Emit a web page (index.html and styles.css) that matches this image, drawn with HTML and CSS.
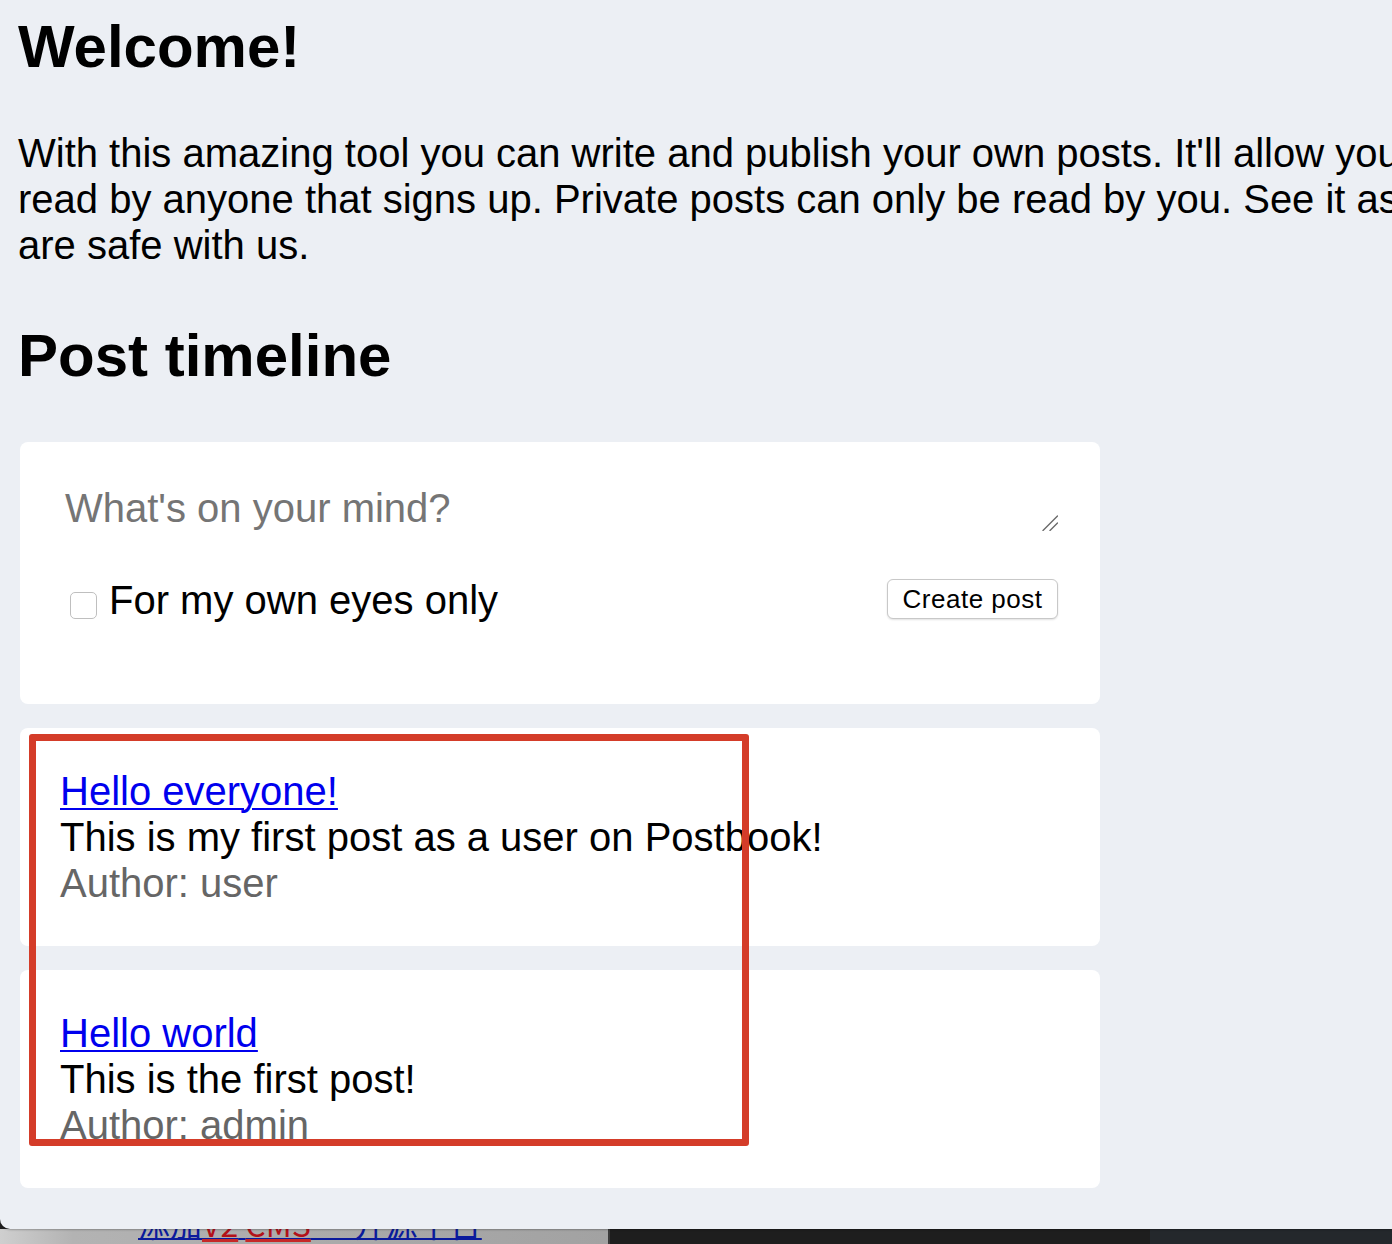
FILE: index.html
```html
<!DOCTYPE html>
<html lang="en">
<head>
<meta charset="utf-8">
<title>Postbook</title>
<link rel="stylesheet" href="styles.css">
</head>
<body>
<div class="window">
  <h1 class="title">Welcome!</h1>
  <p class="intro">With this amazing tool you can write and publish your own posts. It'll allow you to write public and private posts. Public posts can be<br>read by anyone that signs up. Private posts can only be read by you. See it as your own diary. We guarantee that your posts<br>are safe with us.</p>
  <h2 class="section">Post timeline</h2>
  <div class="timeline">
    <form class="card composer">
      <div class="input-wrap">
        <textarea class="composer-input" placeholder="What's on your mind?"></textarea>
        <svg class="grip" width="16" height="16" viewBox="0 0 16 16" aria-hidden="true">
          <path d="M1 15.5 L15.5 1 M8 15.5 L15.5 8" stroke="#6a6a6a" stroke-width="1.4" fill="none" stroke-linecap="round"/>
        </svg>
      </div>
      <div class="composer-row">
        <label class="private"><input type="checkbox" class="check"><span>For my own eyes only</span></label>
        <button class="btn" type="button">Create post</button>
      </div>
    </form>
    <article class="card post">
      <a class="post-title" href="#">Hello everyone!</a>
      <div class="post-body">This is my first post as a user on Postbook!</div>
      <div class="post-author">Author: user</div>
    </article>
    <article class="card post">
      <a class="post-title" href="#">Hello world</a>
      <div class="post-body">This is the first post!</div>
      <div class="post-author">Author: admin</div>
    </article>
  </div>
  <div class="annotation"></div>
</div>
<div class="desktop">
  <div class="desk-left"><a class="desk-link" href="#">添加<span class="hl">V2</span> <span class="hl">CMS</span> — 开源平台</a></div>
  <div class="desk-mid"></div>
  <div class="desk-right"></div>
</div>
</body>
</html>
```

FILE: styles.css
```css
html, body {
  margin: 0;
  padding: 0;
  overflow: hidden;
  background: #1f1f1f;
}

body {
  font-family: "Liberation Sans", Arial, sans-serif;
  color: #000;
  width: 1392px;
  height: 1244px;
}

.window {
  position: relative;
  box-sizing: border-box;
  height: 1229px;
  padding: 12px 0 0 19px;
  background: #eceff4;
  overflow: hidden;
  border-bottom-left-radius: 10px;
  box-shadow: 0 1px 2px rgba(0, 0, 0, 0.25);
  z-index: 1;
}

.title {
  margin: 0 0 0 -1px;
  font-size: 60px;
  line-height: 69px;
  font-weight: 700;
}

.intro {
  margin: 49px 0 0 -1px;
  font-size: 40px;
  line-height: 46px;
  white-space: nowrap;
}

.section {
  margin: 53px 0 0 -1px;
  font-size: 60px;
  line-height: 69px;
  font-weight: 700;
}

.timeline {
  margin: 52px 0 0 1px;
  width: 1080px;
  display: flex;
  flex-direction: column;
  gap: 24px;
}

.card {
  background: #fff;
  border-radius: 8px;
  padding: 40px;
  margin: 0;
}

.input-wrap {
  position: relative;
}

.composer-input {
  display: block;
  box-sizing: border-box;
  width: 100%;
  height: 52px;
  padding: 3px 5px;
  margin: 0;
  border: none;
  outline: none;
  resize: none;
  font-family: inherit;
  font-size: 40px;
  line-height: 46px;
  color: #000;
  background: #fff;
}

.composer-input::placeholder {
  color: #757575;
}

.grip {
  position: absolute;
  right: 2px;
  bottom: 3px;
}

.composer-row {
  display: flex;
  align-items: flex-start;
  justify-content: space-between;
  margin: 43px 2px 41px 0;
  height: 46px;
}

.private {
  display: flex;
  align-items: flex-start;
  font-size: 40px;
  line-height: 46px;
}

.check {
  appearance: none;
  -webkit-appearance: none;
  box-sizing: border-box;
  width: 27px;
  height: 27px;
  margin: 15px 12px 0 10px;
  border: 1.5px solid #bfbfbf;
  border-radius: 5px;
  background: #fff;
}

.btn {
  box-sizing: border-box;
  margin-top: 2px;
  width: 171px;
  height: 40px;
  padding: 0;
  background: #fff;
  border: 1px solid #c8c8c8;
  border-radius: 6px;
  box-shadow: 0 1px 2px rgba(0, 0, 0, 0.12);
  font-family: "Liberation Sans", Arial, sans-serif;
  font-size: 26px;
  letter-spacing: 0.5px;
  color: #000;
}

.post {
  font-size: 40px;
  line-height: 46px;
}

.post-title {
  display: block;
  width: max-content;
  color: #0000ee;
  text-decoration: underline;
  text-decoration-thickness: 2px;
  text-underline-offset: 3px;
}

.post-author {
  color: #666;
}

.annotation {
  position: absolute;
  left: 29px;
  top: 734px;
  width: 720px;
  height: 412px;
  box-sizing: border-box;
  border: 7px solid #d43c29;
  border-radius: 3px;
}

.desktop {
  display: flex;
  height: 15px;
}

.desk-left {
  width: 608px;
  overflow: hidden;
  background: linear-gradient(to right, #cfcfcf 0%, #b3b3b3 12%, #a9a9a9 60%, #a2a2a2 100%);
  border-right: 2px solid #3a3a3a;
}

.desk-link {
  display: block;
  margin: -22px 0 0 138px;
  font-family: "Noto Sans CJK SC", sans-serif;
  font-size: 32px;
  line-height: 32px;
  white-space: nowrap;
  color: #0a1a9c;
  text-decoration: underline;
  text-decoration-thickness: 2px;
}

.hl {
  color: #b3121a;
  text-decoration: underline;
  text-decoration-color: #c62828;
}

.desk-mid {
  width: 540px;
  background: #1e1e1e;
}

.desk-right {
  flex: 1;
  background: #24282c;
}
```
